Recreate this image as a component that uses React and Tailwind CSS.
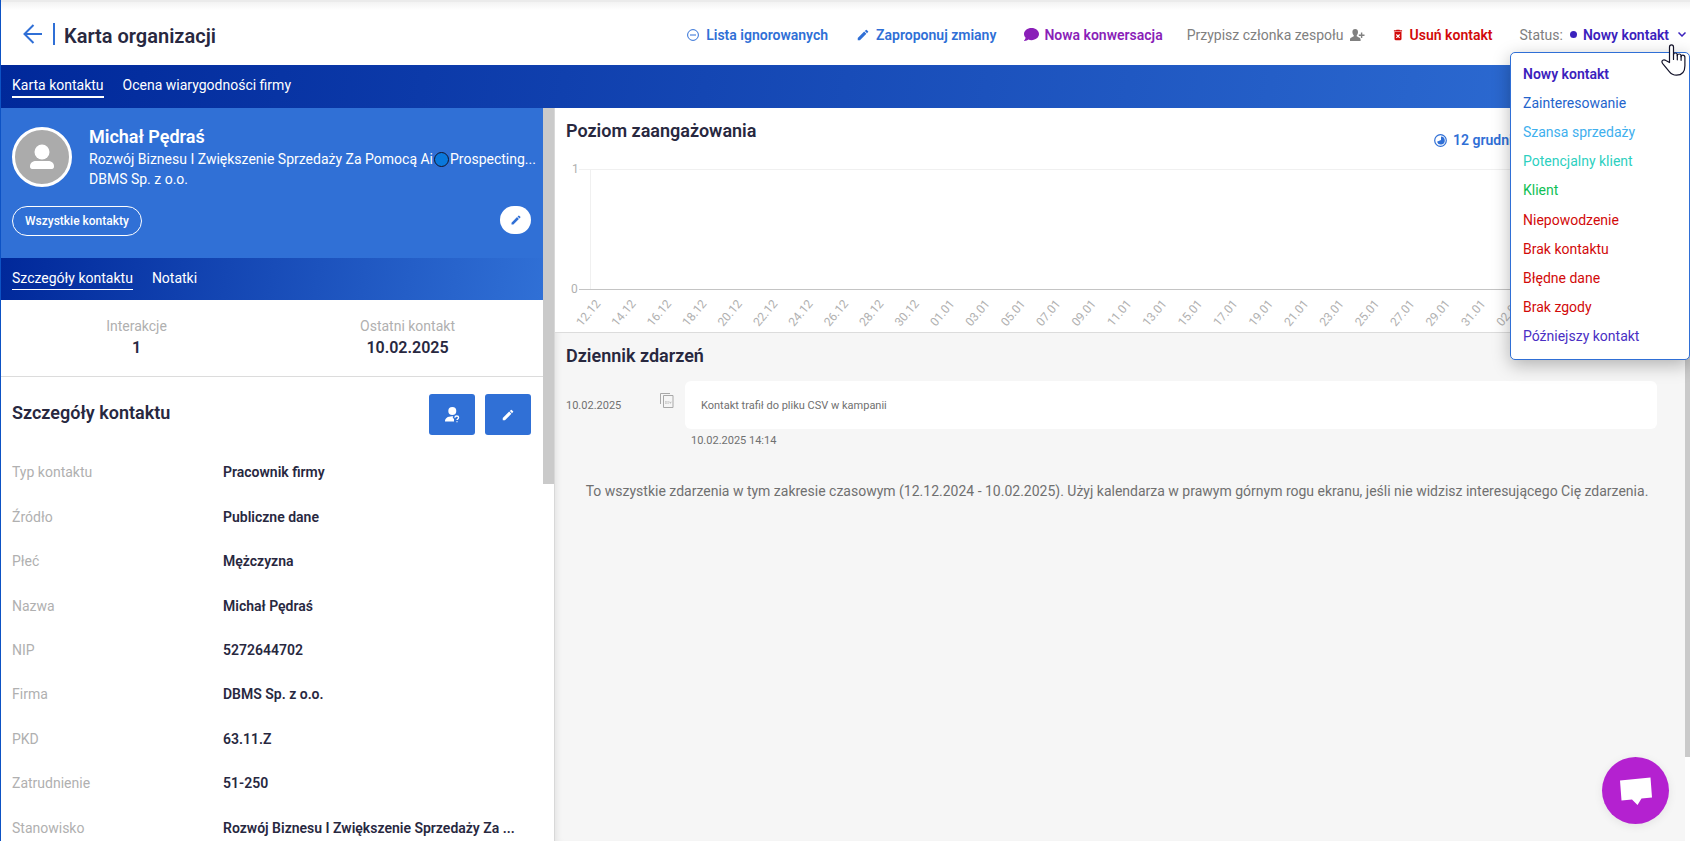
import React from "react";
import { MdEdit, MdDeleteForever } from "react-icons/md";
import { FaComment } from "react-icons/fa";

const FONT = "font-['Roboto','Liberation_Sans',sans-serif]";

const statuses = [
  ["Nowy kontakt", "text-[#3b22bd] font-semibold"],
  ["Zainteresowanie", "text-[#2464cc]"],
  ["Szansa sprzedaży", "text-[#3fb0ee]"],
  ["Potencjalny klient", "text-[#2dd0c0]"],
  ["Klient", "text-[#0fbf55]"],
  ["Niepowodzenie", "text-[#d20a0a]"],
  ["Brak kontaktu", "text-[#d20a0a]"],
  ["Błędne dane", "text-[#d20a0a]"],
  ["Brak zgody", "text-[#d20a0a]"],
  ["Późniejszy kontakt", "text-[#4a2fc4]"],
];

const details = [
  ["Typ kontaktu", "Pracownik firmy"],
  ["Źródło", "Publiczne dane"],
  ["Płeć", "Mężczyzna"],
  ["Nazwa", "Michał Pędraś"],
  ["NIP", "5272644702"],
  ["Firma", "DBMS Sp. z o.o."],
  ["PKD", "63.11.Z"],
  ["Zatrudnienie", "51-250"],
  ["Stanowisko", "Rozwój Biznesu I Zwiększenie Sprzedaży Za ..."],
];

const days = [
  "12.12", "14.12", "16.12", "18.12", "20.12", "22.12", "24.12", "26.12", "28.12", "30.12",
  "01.01", "03.01", "05.01", "07.01", "09.01", "11.01", "13.01", "15.01", "17.01", "19.01",
  "21.01", "23.01", "25.01", "27.01", "29.01", "31.01", "02.02", "04.02", "06.02", "08.02", "10.02",
];

function UserPlusIcon() {
  return (
    <svg width="15" height="12" viewBox="0 0 15 12" fill="#808080" aria-hidden="true">
      <path d="M5.2 0C3.3 0 2.4 1.2 2.4 3c0 1.500.7 2.800 1.400 3.400v.9C2.600 8.200 0 8.500 0 10.600V12h10.600v-1.400c0-2.100-2.700-2.400-3.900-3.300v-.9C7.400 5.800 8 4.500 8 3 8 1.200 7 0 5.200 0z" />
      <path d="M10.900 3.600h1.400v2h2.200V7h-2.200v2.100h-1.400V7H8.800V5.600h2.100z" />
    </svg>
  );
}

function UserQuestionIcon() {
  return (
    <svg width="15" height="16" viewBox="0 0 15 16" fill="#fff" aria-hidden="true">
      <circle cx="7.300" cy="4" r="4" />
      <path d="M0 14.500c0-3.300 2.500-5 7-5.200h1.200c-.5.700-.5 1.500-.2 2.200h1v3z" />
      <path d="M9.900 10.700c0-1 .7-1.700 1.800-1.700s1.900.6 1.900 1.600c0 1.300-1.600 1.300-1.600 2.500M12 14.200v1.100" fill="none" stroke="#fff" strokeWidth="1.300" />
    </svg>
  );
}

function CsvIcon() {
  return (
    <svg width="14" height="16" viewBox="0 0 14 16" fill="none" stroke="#a8a8a8" aria-hidden="true">
      <path d="M.5 11V.5H10" />
      <path d="M3.500 2.500h9.500v12H3.500z" />
      <path d="M5 10.200h1.800M5 8.800h1.800M7.400 8.800h1.400M7.400 10.200h1.400M9.600 8.700l.8 1.600.8-1.600" strokeWidth=".7" />
    </svg>
  );
}

function HeaderLink({ icon, className, children }) {
  return (
    <button type="button" className={"flex items-center text-sm font-semibold " + className}>
      {icon}
      {children}
    </button>
  );
}

function StatusMenu() {
  return (
    <ul className="absolute right-0 top-[50px] z-20 flex h-[308px] w-[180px] flex-col rounded-[5px] border border-[#2f6fd6] bg-white pt-[6px] pb-[8px] shadow-[0_5px_18px_rgba(0,0,0,0.28)]">
      {statuses.map(([label, tone]) => (
        <li key={label} className="flex flex-1">
          <button type="button" className={"flex w-full items-center pl-3 text-left text-sm leading-5 " + tone}>
            {label}
          </button>
        </li>
      ))}
    </ul>
  );
}

function HandCursor() {
  return (
    <svg className="pointer-events-none absolute right-[4px] top-[42px] z-30" width="25" height="33" viewBox="0 0 25 33" aria-hidden="true">
      <path
        d="M8.500 18.500V3c0-1.400.9-2.200 2-2.200s2 .8 2 2.200v8c0-1.300.7-2 1.800-2 1.200 0 2 .8 2 2v.8c0-1.200.7-1.800 1.800-1.800 1.200 0 2 .8 2 2v.8c0-1 .7-1.600 1.700-1.600 1.300 0 2.100.9 2.100 2.200v8.400c0 6-3.300 9.400-8.400 9.400-3.300 0-5.400-1.300-7.200-3.600l-6.600-8c-.9-1.200-1-2.400-.1-3.200 1-.9 2.300-.6 3.300.1z"
        fill="#fff" stroke="#14142b" strokeWidth="1.200" strokeLinejoin="round"
      />
      <path d="M12.500 10.500v5M16.300 11.300v4.500M20.100 12.300v4" stroke="#14142b" strokeWidth="1.200" strokeLinecap="round" />
    </svg>
  );
}

function Header() {
  return (
    <header className="relative z-20 flex h-[65px] shrink-0 items-center justify-between border-t-2 border-[#ebebeb] bg-white bg-linear-to-b from-[#f3f3f3] to-white to-[8px] pl-[22px] pr-1">
      <div className="flex items-center">
        <a href="#back" aria-label="Wstecz" className="text-[#2f6fd6]">
          <svg width="20" height="20" viewBox="0 0 20 20" fill="none" stroke="currentColor" strokeWidth="2" aria-hidden="true">
            <path d="M19 10H2M10.500 1 1.500 10l9 9" />
          </svg>
        </a>
        <span className="ml-[10px] h-[22px] w-[2px] bg-[#2f6fd6]" />
        <h1 className="ml-[9px] pt-1 text-xl font-semibold text-[#28283f]">Karta organizacji</h1>
      </div>
      <div className="flex items-center pt-[2px]">
        <HeaderLink
          className="mr-[28px] gap-[7px] text-[#2f6fd6]"
          icon={
            <svg width="12" height="12" viewBox="0 0 12 12" fill="none" stroke="currentColor" aria-hidden="true">
              <circle cx="6" cy="6" r="5.400" />
              <path d="M3 6h6" />
            </svg>
          }
        >
          Lista ignorowanych
        </HeaderLink>
        <HeaderLink className="mr-[28px] gap-[6px] text-[#2f6fd6]" icon={<MdEdit size={14} />}>Zaproponuj zmiany</HeaderLink>
        <HeaderLink className="mr-[24px] gap-[5px] text-[#8a1fb8]" icon={<FaComment size={15} />}>Nowa konwersacja</HeaderLink>
        <button type="button" className="mr-[26px] flex items-center gap-[6px] text-sm text-[#808080]">
          Przypisz członka zespołu <UserPlusIcon />
        </button>
        <HeaderLink className="mr-[27px] gap-[5px] text-[#d20a0a]" icon={<MdDeleteForever size={14} />}>Usuń kontakt</HeaderLink>
        <span className="text-sm text-[#808080]">Status:</span>
        <button type="button" aria-haspopup="true" aria-expanded="true" className="ml-[7px] flex items-center text-sm font-semibold text-[#3b22bd]">
          <span className="mr-[6px] size-[7px] rounded-full bg-[#3b22bd]" />
          Nowy kontakt
          <svg className="ml-[9px]" width="8" height="5" viewBox="0 0 8 5" fill="none" stroke="currentColor" strokeWidth="1.500" aria-hidden="true">
            <path d="M.5.500 4 4 7.500.500" />
          </svg>
        </button>
      </div>
      <StatusMenu />
      <HandCursor />
    </header>
  );
}

function ContactPanel() {
  return (
    <aside className="flex w-[542px] min-w-0 shrink-0 flex-col overflow-hidden bg-white">
      <section className="h-[150px] shrink-0 bg-[#3070d6] pt-[18px] pr-3 pl-[11px] text-white">
        <div className="flex">
          <div className="mt-px grid size-[60px] shrink-0 place-items-center rounded-full border-3 border-white bg-[#ababab]">
            <svg width="26" height="26" viewBox="0 0 26 26" fill="#fff" aria-hidden="true">
              <circle cx="13" cy="8" r="7.500" />
              <path d="M1 22.500C1 18.500 4 17 7 17h12c3 0 6 1.500 6 5.500 0 1.500-.8 2.500-2 2.500H3c-1.200 0-2-1-2-2.500z" />
            </svg>
          </div>
          <div className="ml-[17px] min-w-0 text-sm leading-5">
            <h2 className="pb-[2px] text-lg font-semibold leading-[21px]">Michał Pędraś</h2>
            <p className="flex items-center whitespace-nowrap">
              Rozwój Biznesu I Zwiększenie Sprzedaży Za Pomocą Ai
              <span className="mx-px size-[15px] shrink-0 rounded-full border border-[#14142b] bg-[#0a78dc]" />
              Prospecting...
            </p>
            <p>DBMS Sp. z o.o.</p>
          </div>
        </div>
        <div className="mt-[17px] flex items-start justify-between">
          <button type="button" className="h-[30px] rounded-full border border-white px-3 text-xs font-medium">Wszystkie kontakty</button>
          <button type="button" aria-label="Edytuj kontakt" className="grid h-7 w-[31px] place-items-center rounded-full bg-white text-[#3070d6]"><MdEdit size={12} /></button>
        </div>
      </section>
      <nav className="flex h-[42px] shrink-0 items-center gap-[19px] bg-linear-[100deg,#00289a,#3070d6] px-[11px] text-sm text-white">
        <a href="#szczegoly" className="border-b border-white leading-[21px]">Szczegóły kontaktu</a>
        <a href="#notatki" className="border-b border-transparent leading-[21px]">Notatki</a>
      </nav>
      <section className="grid h-[77px] shrink-0 grid-cols-2 border-b border-[#dcdcdc] pt-4 text-center">
        <div>
          <p className="text-sm text-[#b0b0b0]">Interakcje</p>
          <p className="text-base leading-6 font-semibold text-[#28283f]">1</p>
        </div>
        <div>
          <p className="text-sm text-[#b0b0b0]">Ostatni kontakt</p>
          <p className="text-base leading-6 font-semibold text-[#28283f]">10.02.2025</p>
        </div>
      </section>
      <section className="shrink-0 pt-[17px] pr-3 pl-[11px]">
        <div className="flex items-center gap-[10px]">
          <h3 className="flex-1 pb-[3px] text-lg font-semibold text-[#28283f]">Szczegóły kontaktu</h3>
          <button type="button" aria-label="Zweryfikuj kontakt" className="grid h-[41px] w-[46px] place-items-center rounded-[3px] bg-[#3070d6]"><UserQuestionIcon /></button>
          <button type="button" aria-label="Edytuj szczegóły" className="grid h-[41px] w-[46px] place-items-center rounded-[3px] bg-[#3070d6] text-white"><MdEdit size={14} /></button>
        </div>
        <dl className="mt-[15px] grid h-[400px] auto-rows-fr text-sm">
          {details.map(([label, value]) => (
            <div key={label} className="grid grid-cols-[211px_1fr] items-center">
              <dt className="text-[#b0b0b0]">{label}</dt>
              <dd className="truncate font-semibold text-[#28283f]">{value}</dd>
            </div>
          ))}
        </dl>
      </section>
    </aside>
  );
}

function Chart() {
  return (
    <svg className="block h-[179px] w-full" aria-label="Poziom zaangażowania" role="img">
      <g stroke="#f0f0f0">
        <path d="M24 16.500h1094" />
        <path d="M35.500 16v120" />
      </g>
      <path d="M24 136.500h1094" stroke="#c4c4c4" />
      <g fill="#b0b0b0" className="text-xs">
        <text x="17" y="20">1</text>
        <text x="16" y="140">0</text>
        {days.map((day, i) => (
          <text key={day} textAnchor="end" transform={`translate(${46 + i * 35.4} 151) rotate(-50)`}>{day}</text>
        ))}
      </g>
    </svg>
  );
}

function Activity() {
  return (
    <main className="flex min-w-0 flex-1 flex-col border-l border-[#d8d8d8] bg-[#f6f6f6] shadow-[inset_6px_0_6px_-4px_rgba(0,0,0,0.08)]">
      <section className="h-[225px] shrink-0 border-b border-[#dcdcdc] bg-white">
        <div className="flex h-[45px] justify-between pl-[11px]">
          <h3 className="pt-[9px] text-lg font-semibold text-[#28283f]">Poziom zaangażowania</h3>
          <button type="button" className="mr-4 flex w-[235px] items-center gap-[6px] self-end pb-[3px] text-sm font-semibold whitespace-nowrap text-[#2f6fd6]">
            <svg width="13" height="13" viewBox="0 0 13 13" aria-hidden="true">
              <circle cx="6.500" cy="6.500" r="5.800" fill="none" stroke="currentColor" strokeWidth="1.200" />
              <path d="M7 2.500a4 4 0 1 1-4 5.200L7 6z" fill="currentColor" />
            </svg>
            12 grudnia 2024 - 10 lutego 2025
          </button>
        </div>
        <Chart />
      </section>
      <section className="flex-1 pl-[11px] pr-7 text-[#707070]">
        <h3 className="pt-[9px] text-lg font-semibold text-[#28283f]">Dziennik zdarzeń</h3>
        <div className="mt-[11px] flex text-[11px]">
          <time className="flex h-12 w-[94px] items-center pt-[2px]">10.02.2025</time>
          <div className="w-[25px] pt-3"><CsvIcon /></div>
          <div className="min-w-0 flex-1">
            <p className="flex h-12 items-center rounded-md bg-white pt-[2px] pl-4">Kontakt trafił do pliku CSV w kampanii</p>
            <time className="block pt-1 pl-[6px] leading-4">10.02.2025 14:14</time>
          </div>
        </div>
        <p className="mt-8 pl-[11px] text-center text-sm text-[#707070]">
          To wszystkie zdarzenia w tym zakresie czasowym (12.12.2024 - 10.02.2025). Użyj kalendarza w prawym górnym rogu ekranu, jeśli nie widzisz interesującego Cię zdarzenia.
        </p>
      </section>
    </main>
  );
}

export default function App() {
  return (
    <div className={"relative flex h-screen flex-col overflow-hidden border-l border-[#0d52c4] bg-white " + FONT}>
      <Header />
      <nav className="flex h-[43px] shrink-0 items-center gap-[19px] bg-linear-[100deg,#00289a,#3070d6] px-[11px] pb-[2px] text-sm text-white">
        <a href="#karta" className="border-b-2 border-white leading-[22px]">Karta kontaktu</a>
        <a href="#ocena" className="border-b-2 border-transparent leading-[22px]">Ocena wiarygodności firmy</a>
      </nav>
      <div className="flex min-h-0 flex-1">
        <ContactPanel />
        <div className="w-[11px] shrink-0 bg-white"><div className="h-[376px] bg-[#cacaca]" /></div>
        <Activity />
        <div className="w-[5px] shrink-0 bg-white"><div className="h-[649px] bg-[#cacaca]" /></div>
      </div>
      <button type="button" aria-label="Otwórz czat" className="absolute right-[21px] bottom-[17px] grid size-[67px] place-items-center rounded-full bg-[#b421d0] shadow-[0_2px_10px_rgba(0,0,0,0.08)]">
        <svg width="34" height="30" viewBox="0 0 34 30" fill="#fff" aria-hidden="true">
          <path d="M1 4.500 31.500 1.500 33 21.500 22.500 22.500 18.500 29 13 23.500 2.500 24.500z" />
        </svg>
      </button>
    </div>
  );
}
